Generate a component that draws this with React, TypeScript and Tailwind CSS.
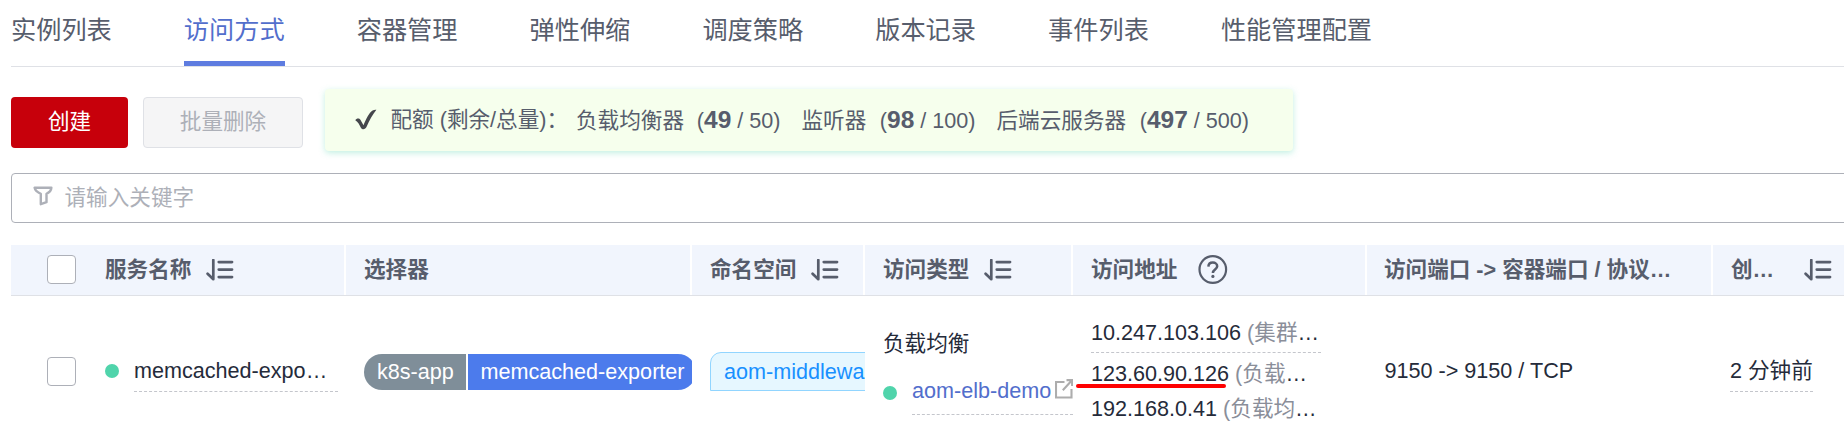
import React from 'react';

const tabs = ['实例列表', '访问方式', '容器管理', '弹性伸缩', '调度策略', '版本记录', '事件列表', '性能管理配置'];
const activeTab = '访问方式';

function SortIcon({ className = '' }: { className?: string }) {
  return (
    <svg className={`shrink-0 ${className}`} width="28" height="22" viewBox="0 0 28 22" fill="none" stroke="#575d6c">
      <path d="M7.3 1v19.2L1.6 14.8" strokeWidth="2.7" strokeLinejoin="round" strokeLinecap="round" />
      <path d="M12.8 3.1h13.2M12.8 10.6h13.2M12.8 18.1h13.2" strokeWidth="2.8" strokeLinecap="round" />
    </svg>
  );
}

function FilterIcon() {
  return (
    <svg className="mb-[4px]" width="20" height="20" viewBox="0 0 20 20" fill="none" stroke="#adb0b8" strokeWidth="2.4" strokeLinejoin="round">
      <path d="M1.6 1.7h16.8c-.2 2.8-1.6 4.6-4.900 6.100v8.400l-5.700 2V7.800C4.300 6.300 2 4.500 1.600 1.700z" />
    </svg>
  );
}

function CheckMark() {
  return (
    <svg width="22" height="22" viewBox="0 0 22 22" fill="none">
      <path
        d="M.3 11.200C1.300 9.200 4.300 8.800 5.400 10.800L8.500 16.200C11.300 9.300 14 3.800 17.600 1.400C18.800.7 20.500.6 21.400.8C17.700 5.500 14.400 11.300 11.600 17.800C10.500 20.400 7.200 21.100 5.900 18.700C4.600 16 3 12.800.3 11.200Z"
        fill="#45474c"
      />
    </svg>
  );
}

function HelpIcon() {
  return (
    <svg width="30" height="30" viewBox="0 0 30 30" fill="none" stroke="#575d6c">
      <circle cx="14.8" cy="14.5" r="13.3" strokeWidth="2.2" />
      <path d="M10.4 11.6c.1-2.5 1.9-4 4.4-4s4.4 1.5 4.4 3.7c0 3.2-4.3 3.3-4.3 6.6" strokeWidth="2.5" />
      <circle cx="14.9" cy="21.4" r="1.6" fill="#575d6c" stroke="none" />
    </svg>
  );
}

function ExternalIcon() {
  return (
    <svg width="18" height="20" viewBox="0 0 18 20" fill="none" stroke="#adadad" strokeWidth="2.1">
      <path d="M9.5 3H1v15.500h15.500V10" />
      <path d="M7.800 11.200L16.500 1.800M11.500 1.100h5.600v6" />
    </svg>
  );
}

function Checkbox() {
  return <span className="block size-[29px] shrink-0 rounded-[4px] border border-[#adb0b8] bg-white" />;
}

function Dot({ className = '' }: { className?: string }) {
  return <span className={`block size-[14px] shrink-0 rounded-full bg-[#50d4ab] ${className}`} />;
}

function HeadCell({ children, className = 'border-r-2 pl-[18px]' }: { children: React.ReactNode; className?: string }) {
  return <div className={`flex h-[50px] items-center overflow-hidden border-white ${className}`}>{children}</div>;
}

function Quota({ label, left, total, className }: { label: string; left: number; total: number; className: string }) {
  return (
    <span className={`flex shrink-0 items-baseline justify-between ${className}`}>
      <span>{label}</span>
      <span>
        (<b className="text-[24.5px] font-bold">{left}</b> / {total})
      </span>
    </span>
  );
}

const columns = 'grid grid-cols-[335px_346px_173px_208px_294px_346px_1fr]';

export default function App() {
  return (
    <div className="h-[434px] w-full overflow-hidden whitespace-nowrap bg-white pl-[11px] font-['Liberation_Sans','Noto_Sans_CJK_SC',sans-serif] text-[21.6px] leading-[30px] text-[#252b3a]">
      <nav className="flex h-[67px] gap-[72.1px] border-b border-[#dfe1e6] text-[25.2px] text-[#575d6c]">
        {tabs.map((t) => (
          <a
            key={t}
            className={
              t === activeTab
                ? 'flex h-[66px] items-start border-b-[5px] border-[#5e7ce0] pt-[15px] text-[#526ecc]'
                : 'flex h-[66px] items-start pt-[15px]'
            }
          >
            {t}
          </a>
        ))}
      </nav>

      <div className="flex h-[106px] items-start pt-[22px] text-[#575d6c]">
        <button className="mt-[8px] h-[51px] w-[117px] rounded-[4px] bg-[#c7000b] pb-[2px] text-white">创建</button>
        <button className="ml-[15px] mt-[8px] h-[51px] w-[160px] rounded-[4px] border border-[#dfe1e6] bg-[#f5f5f6] pb-[2px] text-[#adb0b8]">
          批量删除
        </button>
        <div className="ml-[22px] flex h-[62px] w-[968px] items-center rounded-[4px] bg-[#f6ffed] pl-[30px] shadow-[0_2px_6px_rgba(80,212,171,0.35)]">
          <CheckMark />
          <span className="ml-[13.5px] w-[185.5px] shrink-0">配额 (剩余/总量)：</span>
          <Quota label="负载均衡器" left={49} total={50} className="w-[204.5px]" />
          <Quota label="监听器" left={98} total={100} className="ml-[21px] w-[174px]" />
          <Quota label="后端云服务器" left={497} total={500} className="ml-[21px] w-[252.5px]" />
        </div>
      </div>

      <div className="-mr-2 flex h-[50px] items-center rounded-[4px] border border-[#adb0b8] pl-[21px] text-[#adb0b8]">
        <FilterIcon />
        <span className="ml-[11.5px]">请输入关键字</span>
      </div>

      <div className={`mt-[22px] border-b border-[#dfe1e6] bg-[#f1f5fd] font-bold text-[#575d6c] ${columns}`}>
        <HeadCell className="border-r-2 pl-[36px]">
          <span className="mb-[2px]">
            <Checkbox />
          </span>
          <span className="ml-[29px]">服务名称</span>
          <SortIcon className="ml-[15px]" />
        </HeadCell>
        <HeadCell>选择器</HeadCell>
        <HeadCell>
          命名空间
          <SortIcon className="ml-[15px]" />
        </HeadCell>
        <HeadCell>
          访问类型
          <SortIcon className="ml-[15px]" />
        </HeadCell>
        <HeadCell>
          <span className="mr-[21px]">访问地址</span>
          <HelpIcon />
        </HeadCell>
        <HeadCell className="border-r-2 pl-[17px]">访问端口 -&gt; 容器端口 / 协议…</HeadCell>
        <HeadCell className="pl-[18px]">
          <span className="w-[73px]">创…</span>
          <SortIcon />
        </HeadCell>
      </div>

      <div className={`h-[138px] ${columns}`}>
        <div className="flex items-start pl-[36px] pt-[61px]">
          <Checkbox />
          <Dot className="ml-[29px] mt-[7px]" />
          <span className="-mt-px ml-[15px] block h-[36px] w-[204px] border-b border-dashed border-[#c4c6cc]">memcached-expo…</span>
        </div>

        <div className="flex items-start gap-[2px] overflow-hidden pl-[18px] pt-[58px] text-white">
          <span className="h-[36px] w-[102px] shrink-0 rounded-l-[18px] bg-[#7f8e99] pl-[13px] leading-[35px]">k8s-app</span>
          <span className="h-[36px] w-[228px] shrink-0 rounded-r-[18px] bg-[#4c7bec] pl-[12.5px] leading-[35px]">memcached-exporter</span>
        </div>

        <div className="overflow-hidden pl-[18px] pt-[56px]">
          <div className="h-[39px] w-[200px] rounded-tl-[11px] border border-[#91d5ff] bg-[#e6f7ff] pl-[13px] leading-[38px] text-[#1890ff]">
            aom-middlewa
          </div>
        </div>

        <div className="pl-[18px] pt-[33px]">
          <div className="h-[31px]">负载均衡</div>
          <div className="flex items-start">
            <Dot className="mt-[26px]" />
            <div className="ml-[15px] pt-[16px]">
              <div className="flex h-[39px] w-[161px] items-start border-b border-dashed border-[#c4c6cc] text-[#526ecc]">
                <span className="w-[143px]">aom-elb-demo</span>
                <span className="block pt-[3px]">
                  <ExternalIcon />
                </span>
              </div>
            </div>
          </div>
        </div>

        <div className="relative pl-[18px] pt-[22px]">
          <div className="h-[35px] w-[230px] border-b border-dashed border-[#c4c6cc]">
            10.247.103.106 <span className="text-[#8a8e99]">(集群</span>…
          </div>
          <div className="mt-[6px] h-[35px]">
            123.60.90.126 <span className="text-[#8a8e99]">(负载</span>…
          </div>
          <div>
            192.168.0.41 <span className="text-[#8a8e99]">(负载均</span>…
          </div>
          <span className="absolute left-[3px] top-[88px] h-[4px] w-[150px] rounded-full bg-[#ff0000]" />
        </div>

        <div className="pl-[17.5px] pt-[60px]">9150 -&gt; 9150 / TCP</div>

        <div className="pl-[17px] pt-[60px]">
          <div className="h-[36px] w-[83px] border-b border-dashed border-[#c4c6cc]">2 分钟前</div>
        </div>
      </div>
    </div>
  );
}
